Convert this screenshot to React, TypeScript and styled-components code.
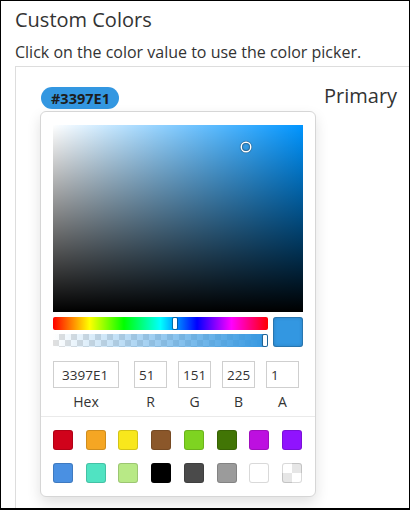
import React from 'react';
import styled, { createGlobalStyle } from 'styled-components';

const BRAND = '#3397E1';
const TextColor = '#333';
const LineColor = '#ddd';

const GlobalStyle = createGlobalStyle`
  html, body {
    margin: 0;
    padding: 0;
    height: 510px;
    overflow: hidden;
    background: #fff;
  }
  * {
    box-sizing: border-box;
  }
`;

const Frame = styled.div`
  display: flex;
  flex-direction: column;
  height: 510px;
  border: 1px solid #000;
  border-bottom-width: 2px;
  padding: 7px 0 0 14px;
  font-family: 'Open Sans', sans-serif;
  color: ${TextColor};
  overflow: hidden;
`;

const Title = styled.h2`
  margin: 0;
  font-size: 20px;
  font-weight: 400;
  line-height: 24px;
`;

const Hint = styled.p`
  margin: 9px 0 0;
  font-size: 16px;
  line-height: 22px;
`;

const Panel = styled.div`
  flex: 1;
  display: flex;
  align-items: flex-start;
  gap: 8px;
  margin-top: 3px;
  padding: 20px 0 0 25px;
  border: 1px solid ${LineColor};
  border-right: none;
  border-bottom: none;
`;

const PickerColumn = styled.div`
  display: flex;
  flex-direction: column;
  align-items: flex-start;
  gap: 2px;
`;

const ValuePill = styled.button`
  height: 22px;
  padding: 0 9px 0 10px;
  border: none;
  border-radius: 11px;
  background: ${BRAND};
  color: #1d1d1d;
  font: 700 14.5px 'Open Sans', sans-serif;
  cursor: pointer;
`;

const Label = styled.div`
  font-size: 20px;
  line-height: 24px;
  margin-top: -3px;
`;

const Popover = styled.div`
  width: 276px;
  margin-left: -1px;
  background: #fff;
  border: 1px solid #d6d6d6;
  border-radius: 6px;
  box-shadow: 0 6px 14px rgba(0, 0, 0, 0.12);
`;

const Body = styled.div`
  padding: 13px 12px 0;
`;

const Saturation = styled.div<{ $hue: number }>`
  position: relative;
  height: 187px;
  background:
    linear-gradient(to top, #000, rgba(0, 0, 0, 0)),
    linear-gradient(to right, #fff, rgba(255, 255, 255, 0)),
    hsl(${(p) => p.$hue}, 100%, 50%);
`;

const Pointer = styled.div`
  position: absolute;
  width: 8px;
  height: 8px;
  margin: -4px 0 0 -4px;
  border-radius: 50%;
  box-shadow: 0 0 0 1.5px #fff, inset 0 0 1px 1px rgba(0, 0, 0, 0.3), 0 0 1px 2px rgba(0, 0, 0, 0.4);
`;

const Controls = styled.div`
  display: flex;
  gap: 5px;
  margin-top: 5px;
`;

const Bars = styled.div`
  flex: 1;
  display: flex;
  flex-direction: column;
  gap: 4px;
`;

const Bar = styled.div`
  position: relative;
  height: 13px;
  border-radius: 2px;
  overflow: hidden;
`;

const HueBar = styled(Bar)`
  background: linear-gradient(
    to right,
    #f00 0%, #ff0 17%, #0f0 33%, #0ff 50%, #00f 67%, #f0f 83%, #f00 100%
  );
`;

const AlphaBar = styled(Bar)`
  background:
    linear-gradient(to right, rgba(51, 151, 225, 0), rgb(51, 151, 225)),
    repeating-conic-gradient(#e0e0e0 0% 25%, #fff 0% 50%) 0 0 / 12px 12px;
`;

const Handle = styled.div`
  position: absolute;
  top: 1px;
  width: 4px;
  height: 11px;
  margin-left: -2px;
  border-radius: 1px;
  background: #fff;
  box-shadow: 0 0 0 1px rgba(0, 0, 0, 0.2), 0 0 1px 1px rgba(0, 0, 0, 0.2);
`;

const Preview = styled.div`
  width: 30px;
  height: 30px;
  border-radius: 3px;
  background: ${BRAND};
  box-shadow: inset 0 0 0 1px rgba(0, 0, 0, 0.15), inset 0 0 4px rgba(0, 0, 0, 0.2);
`;

const Fields = styled.div`
  display: flex;
  gap: 11px;
  margin-top: 14px;
`;

const Field = styled.label<{ $wide?: boolean }>`
  display: flex;
  flex-direction: column;
  align-items: center;
  width: ${(p) => (p.$wide ? '66px' : '33px')};
  margin-right: ${(p) => (p.$wide ? '4px' : '0')};
`;

const Input = styled.input<{ $wide?: boolean }>`
  width: 100%;
  height: 27px;
  padding: 0 0 0 ${(p) => (p.$wide ? '8px' : '4px')};
  border: 1px solid #cfcfcf;
  border-radius: 0;
  font: 400 13.5px 'Open Sans', sans-serif;
  color: ${TextColor};
  outline: none;
`;

const FieldName = styled.span`
  margin-top: 4px;
  font-size: 14px;
  line-height: 19px;
`;

const Presets = styled.div`
  display: grid;
  grid-template-columns: repeat(8, 20px);
  justify-content: space-between;
  row-gap: 13px;
  margin-top: 5px;
  padding: 13px 13px 13px 12px;
  border-top: 1px solid #eaeaea;
`;

const Swatch = styled.div<{ $color: string }>`
  width: 20px;
  height: 20px;
  border-radius: 3px;
  background: ${(p) => p.$color};
  box-shadow: inset 0 0 0 1px rgba(0, 0, 0, 0.15);
  cursor: pointer;
`;

const EmptySwatch = styled(Swatch)`
  background:
    conic-gradient(#e6e6e6 0 25%, #fff 0 50%, #e6e6e6 0 75%, #fff 0) 0 0 / 20px 20px;
`;

const presets = [
  '#D0021B', '#F5A623', '#F8E71C', '#8B572A', '#7ED321', '#417505', '#BD10E0', '#9013FE',
  '#4A90E2', '#50E3C2', '#B8E986', '#000000', '#4A4A4A', '#9B9B9B', '#FFFFFF',
];

const fields = [
  { name: 'Hex', value: '3397E1', wide: true },
  { name: 'R', value: '51' },
  { name: 'G', value: '151' },
  { name: 'B', value: '225' },
  { name: 'A', value: '1' },
];

export default function App() {
  const hue = 205;
  return (
    <>
      <GlobalStyle />
      <Frame>
        <Title>Custom Colors</Title>
        <Hint>Click on the color value to use the color picker.</Hint>
        <Panel>
          <PickerColumn>
            <ValuePill>#3397E1</ValuePill>
            <Popover>
              <Body>
                <Saturation $hue={hue}>
                  <Pointer style={{ left: '77.3%', top: '11.8%' }} />
                </Saturation>
                <Controls>
                  <Bars>
                    <HueBar>
                      <Handle style={{ left: `${(hue / 360) * 100}%` }} />
                    </HueBar>
                    <AlphaBar>
                      <Handle style={{ left: 'calc(100% - 3px)' }} />
                    </AlphaBar>
                  </Bars>
                  <Preview />
                </Controls>
                <Fields>
                  {fields.map((f) => (
                    <Field key={f.name} $wide={f.wide}>
                      <Input $wide={f.wide} defaultValue={f.value} />
                      <FieldName>{f.name}</FieldName>
                    </Field>
                  ))}
                </Fields>
              </Body>
              <Presets>
                {presets.map((c) => (
                  <Swatch key={c} $color={c} />
                ))}
                <EmptySwatch $color="transparent" />
              </Presets>
            </Popover>
          </PickerColumn>
          <Label>Primary</Label>
        </Panel>
      </Frame>
    </>
  );
}
